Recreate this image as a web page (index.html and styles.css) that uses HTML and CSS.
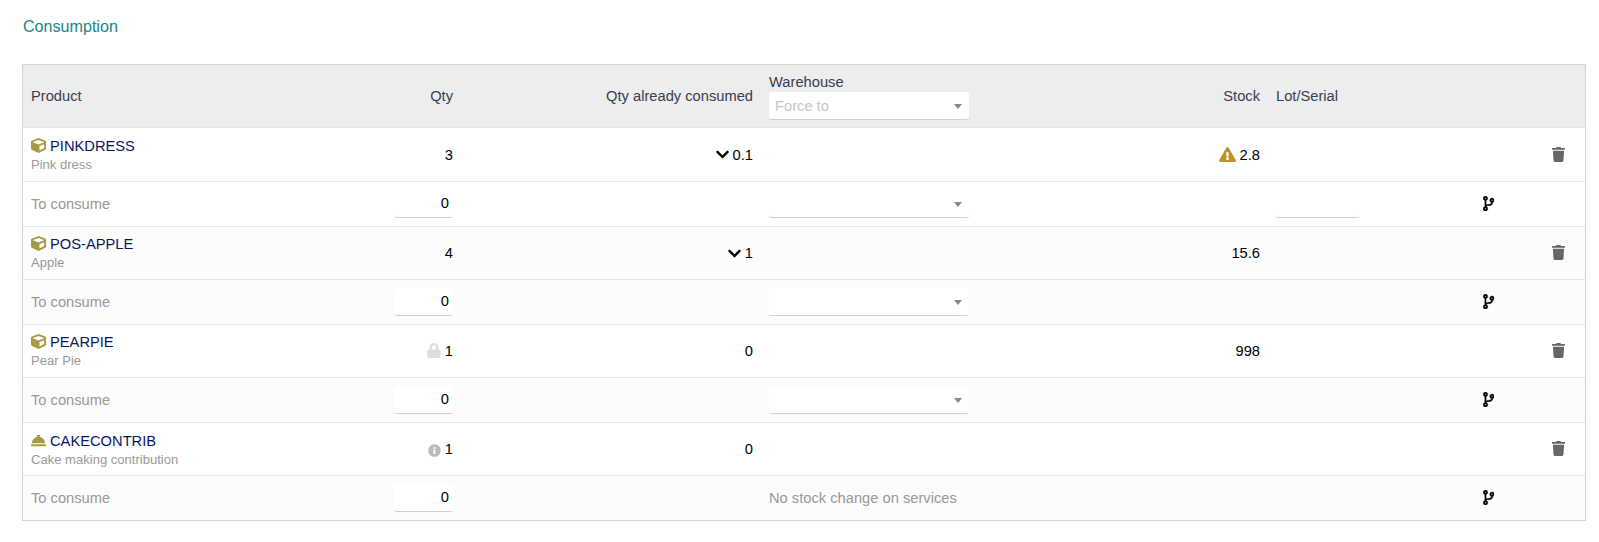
FILE: index.html
```html
<!DOCTYPE html>
<html lang="en">
<head>
<meta charset="utf-8">
<title>Consumption</title>
<link rel="stylesheet" href="styles.css">
</head>
<body>
<svg class="sprite" aria-hidden="true">
<symbol id="cube" viewBox="0 0 512 512"><path d="M239.1 6.3l-208 78c-18.7 7-31.1 25-31.1 45v225.1c0 18.2 10.3 34.8 26.5 42.9l208 104c13.5 6.8 29.4 6.8 42.9 0l208-104c16.3-8.1 26.5-24.8 26.5-42.9V129.3c0-20-12.4-37.9-31.1-44.9l-208-78C262 2.2 250 2.2 239.1 6.3zM256 68.4l192 72v1.1l-192 78-192-78v-1.1l192-72zm32 356V275.5l160-65v133.9l-160 80z"/></symbol>
<symbol id="bell" viewBox="0 0 512 512"><path d="M288 130.54V112h16c8.84 0 16-7.16 16-16V80c0-8.84-7.16-16-16-16h-96c-8.84 0-16 7.16-16 16v16c0 8.84 7.16 16 16 16h16v18.54C115.49 146.11 32 239.18 32 352h448c0-112.82-83.49-205.89-192-221.46zM496 384H16c-8.84 0-16 7.16-16 16v32c0 8.84 7.16 16 16 16h480c8.84 0 16-7.16 16-16v-32c0-8.84-7.16-16-16-16z"/></symbol>
<symbol id="chevron" viewBox="0 0 448 512"><path d="M207.029 381.476L12.686 187.132c-9.373-9.373-9.373-24.569 0-33.941l22.667-22.667c9.357-9.357 24.522-9.375 33.901-.04L224 284.505l154.745-154.021c9.379-9.335 24.544-9.317 33.901.04l22.667 22.667c9.373 9.373 9.373 24.569 0 33.941L240.971 381.476c-9.373 9.372-24.569 9.372-33.942 0z"/></symbol>
<symbol id="warning" viewBox="0 0 576 512"><path d="M569.517 440.013C587.975 472.007 564.806 512 527.94 512H48.054c-36.937 0-59.999-40.055-41.577-71.987L246.423 23.985c18.467-32.009 64.72-31.951 83.154 0l239.94 416.028zM288 354c-25.405 0-46 20.595-46 46s20.595 46 46 46 46-20.595 46-46-20.595-46-46-46zm-43.673-165.346l7.418 136c.347 6.364 5.609 11.346 11.982 11.346h48.546c6.373 0 11.635-4.982 11.982-11.346l7.418-136c.375-6.874-5.098-12.654-11.982-12.654h-63.383c-6.884 0-12.356 5.78-11.981 12.654z"/></symbol>
<symbol id="trash" viewBox="0 0 448 512"><path d="M432 32H312l-9.4-18.7A24 24 0 0 0 281.1 0H166.8a23.72 23.72 0 0 0-21.4 13.3L136 32H16A16 16 0 0 0 0 48v32a16 16 0 0 0 16 16h416a16 16 0 0 0 16-16V48a16 16 0 0 0-16-16zM53.2 467a48 48 0 0 0 47.9 45h245.8a48 48 0 0 0 47.9-45L416 128H32z"/></symbol>
<symbol id="lock" viewBox="0 0 448 512"><path d="M400 224h-24v-72C376 68.2 307.8 0 224 0S72 68.2 72 152v72H48c-26.500 0-48 21.500-48 48v192c0 26.500 21.500 48 48 48h352c26.500 0 48-21.500 48-48V272c0-26.500-21.500-48-48-48zm-104 0H152v-72c0-39.700 32.300-72 72-72s72 32.300 72 72v72z"/></symbol>
<symbol id="info" viewBox="0 0 512 512"><path fill-rule="evenodd" d="M256 8a248 248 0 1 0 0 496a248 248 0 1 0 0-496zm0 110a42 42 0 1 1 0 84a42 42 0 1 1 0-84zm56 254c0 6.600-5.400 12-12 12h-88c-6.600 0-12-5.400-12-12v-24c0-6.600 5.400-12 12-12h12v-64h-12c-6.600 0-12-5.400-12-12v-24c0-6.600 5.400-12 12-12h64c6.600 0 12 5.400 12 12v100h12c6.600 0 12 5.400 12 12z"/></symbol>
<symbol id="branch" viewBox="0 0 384 512"><path fill-rule="evenodd" d="M384 144c0-44.200-35.800-80-80-80s-80 35.800-80 80c0 36.400 24.300 67.100 57.500 76.800-.6 16.100-4.200 28.500-11 36.900-15.400 19.200-49.300 22.400-85.200 25.700-28.200 2.600-57.400 5.400-81.300 16.900v-144c32.500-10.200 56-40.500 56-76.300 0-44.200-35.800-80-80-80S0 35.800 0 80c0 35.800 23.500 66.100 56 76.300v199.300C23.500 365.900 0 396.200 0 432c0 44.200 35.800 80 80 80s80-35.800 80-80c0-34-21.200-63.100-51.200-74.600 3.100-5.200 7.800-9.800 14.900-13.400 16.200-8.200 40.400-10.400 66.100-12.800 42.200-3.900 90-8.400 118.200-43.400 14-17.400 21.100-39.800 21.600-67.900 31.600-10.800 54.400-40.700 54.400-75.900zM80 56a24 24 0 1 1 0 48a24 24 0 1 1 0-48zm0 352a24 24 0 1 1 0 48a24 24 0 1 1 0-48zm224-288a24 24 0 1 1 0 48a24 24 0 1 1 0-48z"/></symbol>
</svg>
<main class="page">
<h1 class="title">Consumption</h1>
<table class="lines">
<colgroup><col class="c-product"><col class="c-qty"><col class="c-used"><col class="c-wh"><col class="c-stock"><col class="c-lot"><col class="c-split"><col class="c-del"></colgroup>
<thead>
<tr class="head"><th>Product</th><th class="num">Qty</th><th class="num">Qty already consumed</th><th class="wh"><div class="wh-label">Warehouse</div><div class="field select placeholder">Force to</div></th><th class="num">Stock</th><th>Lot/Serial</th><th></th><th></th></tr>
</thead>
<tbody>
<tr class="item first"><td><div class="ref"><svg class="icon w15"><use href="#cube"/></svg><a>PINKDRESS</a></div><div class="desc">Pink dress</div></td><td class="num">3</td><td class="num"><div class="val"><svg class="icon w13"><use href="#chevron"/></svg><span>0.1</span></div></td><td></td><td class="num"><div class="val"><svg class="icon w17 warn"><use href="#warning"/></svg><span>2.8</span></div></td><td></td><td></td><td class="del"><svg class="icon w13 bin"><use href="#trash"/></svg></td></tr>
<tr class="use"><td class="muted">To consume</td><td><div class="field qty">0</div></td><td></td><td><div class="field select"></div></td><td></td><td><div class="field lot"></div></td><td class="split"><svg class="icon fork"><use href="#branch"/></svg></td><td></td></tr>
<tr class="item alt"><td><div class="ref"><svg class="icon w15"><use href="#cube"/></svg><a>POS-APPLE</a></div><div class="desc">Apple</div></td><td class="num">4</td><td class="num"><div class="val"><svg class="icon w13"><use href="#chevron"/></svg><span>1</span></div></td><td></td><td class="num">15.6</td><td></td><td></td><td class="del"><svg class="icon w13 bin"><use href="#trash"/></svg></td></tr>
<tr class="use alt"><td class="muted">To consume</td><td><div class="field qty">0</div></td><td></td><td><div class="field select"></div></td><td></td><td></td><td class="split"><svg class="icon fork"><use href="#branch"/></svg></td><td></td></tr>
<tr class="item"><td><div class="ref"><svg class="icon w15"><use href="#cube"/></svg><a>PEARPIE</a></div><div class="desc">Pear Pie</div></td><td class="num"><div class="val"><svg class="icon locked"><use href="#lock"/></svg><span>1</span></div></td><td class="num">0</td><td></td><td class="num">998</td><td></td><td></td><td class="del"><svg class="icon w13 bin"><use href="#trash"/></svg></td></tr>
<tr class="use alt"><td class="muted">To consume</td><td><div class="field qty">0</div></td><td></td><td><div class="field select"></div></td><td></td><td></td><td class="split"><svg class="icon fork"><use href="#branch"/></svg></td><td></td></tr>
<tr class="item service"><td><div class="ref"><svg class="icon w15"><use href="#bell"/></svg><a>CAKECONTRIB</a></div><div class="desc">Cake making contribution</div></td><td class="num"><div class="val"><svg class="icon hint"><use href="#info"/></svg><span>1</span></div></td><td class="num">0</td><td></td><td></td><td></td><td></td><td class="del"><svg class="icon w13 bin"><use href="#trash"/></svg></td></tr>
<tr class="use alt last"><td class="muted">To consume</td><td><div class="field qty">0</div></td><td></td><td class="muted">No stock change on services</td><td></td><td></td><td class="split"><svg class="icon fork"><use href="#branch"/></svg></td><td></td></tr>
</tbody>
</table>
</main>
</body>
</html>
```
FILE: styles.css
```css
* { box-sizing: border-box; }
body { margin: 0; background: #fff; color: #000; font: 14.7px/18px "Liberation Sans", Arial, sans-serif; }
.sprite { display: none; }
.page { padding: 16px 13px 0 22px; }
.title { margin: 0 0 28px; padding-left: 1px; font-size: 16.1px; line-height: 20px; font-weight: 400; color: #218586; }
.lines { width: 1564px; table-layout: fixed; border-collapse: separate; border-spacing: 0; border: 1px solid #d3d4d5; }
.c-product { width: 343px; }
.c-qty { width: 95px; }
.c-used { width: 300px; }
.c-wh { width: 308px; }
.c-stock { width: 199px; }
.c-lot { width: 180px; }
.c-split { width: 84px; }
th, td { padding: 0 8px; border-bottom: 1px solid #e5e6e7; text-align: left; vertical-align: middle; font-weight: 400; white-space: nowrap; }
.head { height: 63px; background: #ebedef; color: #3c3c50; }
.head .wh { vertical-align: top; padding-top: 8px; }
.wh-label { line-height: 18px; padding-bottom: 1px; }
.item { height: 53px; }
.first { height: 54px; }
.use { height: 45px; }
.last { height: 44px; }
.last td { border-bottom: 0; }
.alt { background: #fcfcfc; }
.num { text-align: right; }
.val, .ref { display: flex; align-items: center; gap: 4px; }
.val { justify-content: flex-end; }
.icon { display: block; height: 15px; fill: currentColor; flex: none; }
.w15 { width: 15px; color: #a69944; margin-bottom: 1px; }
.w13 { width: 13px; }
.w17 { width: 17px; }
.warn { color: #bc9526; }
.bin { color: #666; margin-bottom: 1px; }
.locked { width: 14px; color: #ddd; margin-bottom: 1px; }
.hint { width: 13px; height: 13px; color: #bbb; margin-top: 2px; }
.fork { width: 11.5px; margin-bottom: 2px; stroke: currentColor; stroke-width: 10px; }
.ref { color: #0a1464; }
.service .ref { padding-top: 1px; }
.desc { color: #999; font-size: 13.05px; line-height: 17px; padding-top: 1px; }
.muted { color: #999; }
.field { height: 28px; padding: 0 4px 1px; border-bottom: 1px solid #d0d0d0; border-radius: 3px; background: #fff; line-height: 27px; }
.qty { width: 59px; margin-left: auto; text-align: right; line-height: 26px; }
.lot { width: 84px; }
.select { display: flex; align-items: center; width: 200px; padding: 1px 7px 0 6px; }
.select::after { content: ""; margin: 1px 0 0 auto; border: 4px solid transparent; border-top: 5px solid #888; border-bottom: 0; }
.placeholder { color: #c8c8c8; }
.del { padding-left: 20px; }
.split { padding-left: 34.5px; }
```
